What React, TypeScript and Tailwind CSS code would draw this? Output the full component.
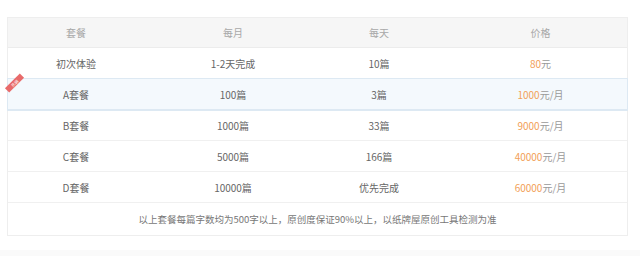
const rows = [
  { name: "初次体验", month: "1-2天完成", day: "10篇", price: "80", unit: "元", hot: false },
  { name: "A套餐", month: "100篇", day: "3篇", price: "1000", unit: "元/月", hot: true },
  { name: "B套餐", month: "1000篇", day: "33篇", price: "9000", unit: "元/月", hot: false },
  { name: "C套餐", month: "5000篇", day: "166篇", price: "40000", unit: "元/月", hot: false },
  { name: "D套餐", month: "10000篇", day: "优先完成", price: "60000", unit: "元/月", hot: false },
];

const grid = "grid grid-cols-[136px_178px_114px_193px] items-center text-center";

export default function App() {
  return (
    <div className="w-[640px] h-[256px] bg-white overflow-hidden font-['Noto_Sans_CJK_SC','Noto_Sans',sans-serif] text-[10px]">
      <div className="ml-[7px] mt-[17px] w-[621px] border border-[#eeeeee] bg-white">
        <div className={`${grid} h-[30px] bg-[#f6f6f6] text-[#a8a8a8] border-b border-[#ececec]`}>
          <div>套餐</div>
          <div>每月</div>
          <div>每天</div>
          <div className="pl-[16px]">价格</div>
        </div>
        {rows.map((r) => (
          <div
            key={r.name}
            className={`${grid} relative h-[31px] text-[#666] border-b ${
              r.hot ? "bg-[#f4f9fd] border-[#dde9f3] outline outline-1 outline-[#dde9f3]" : "border-[#f0f0f0]"
            }`}
          >
            {r.hot && (
              <div className="absolute left-[-4px] top-[1px] w-[21px] h-[6px] bg-[#e86a6a] -rotate-45 text-[4px] leading-[6px] text-white">
                热销
              </div>
            )}
            <div>{r.name}</div>
            <div>{r.month}</div>
            <div>{r.day}</div>
            <div className="pl-[16px]">
              <span className="text-[#f2a058]">{r.price}</span>
              <span className="text-[#999]">{r.unit}</span>
            </div>
          </div>
        ))}
        <div className="h-[32px] flex items-center justify-center text-[#777] text-[9.5px]">
          以上套餐每篇字数均为500字以上，原创度保证90%以上，以纸牌屋原创工具检测为准
        </div>
      </div>
      <div className="mt-[14px] h-[10px] bg-[#fafafa]" />
    </div>
  );
}
